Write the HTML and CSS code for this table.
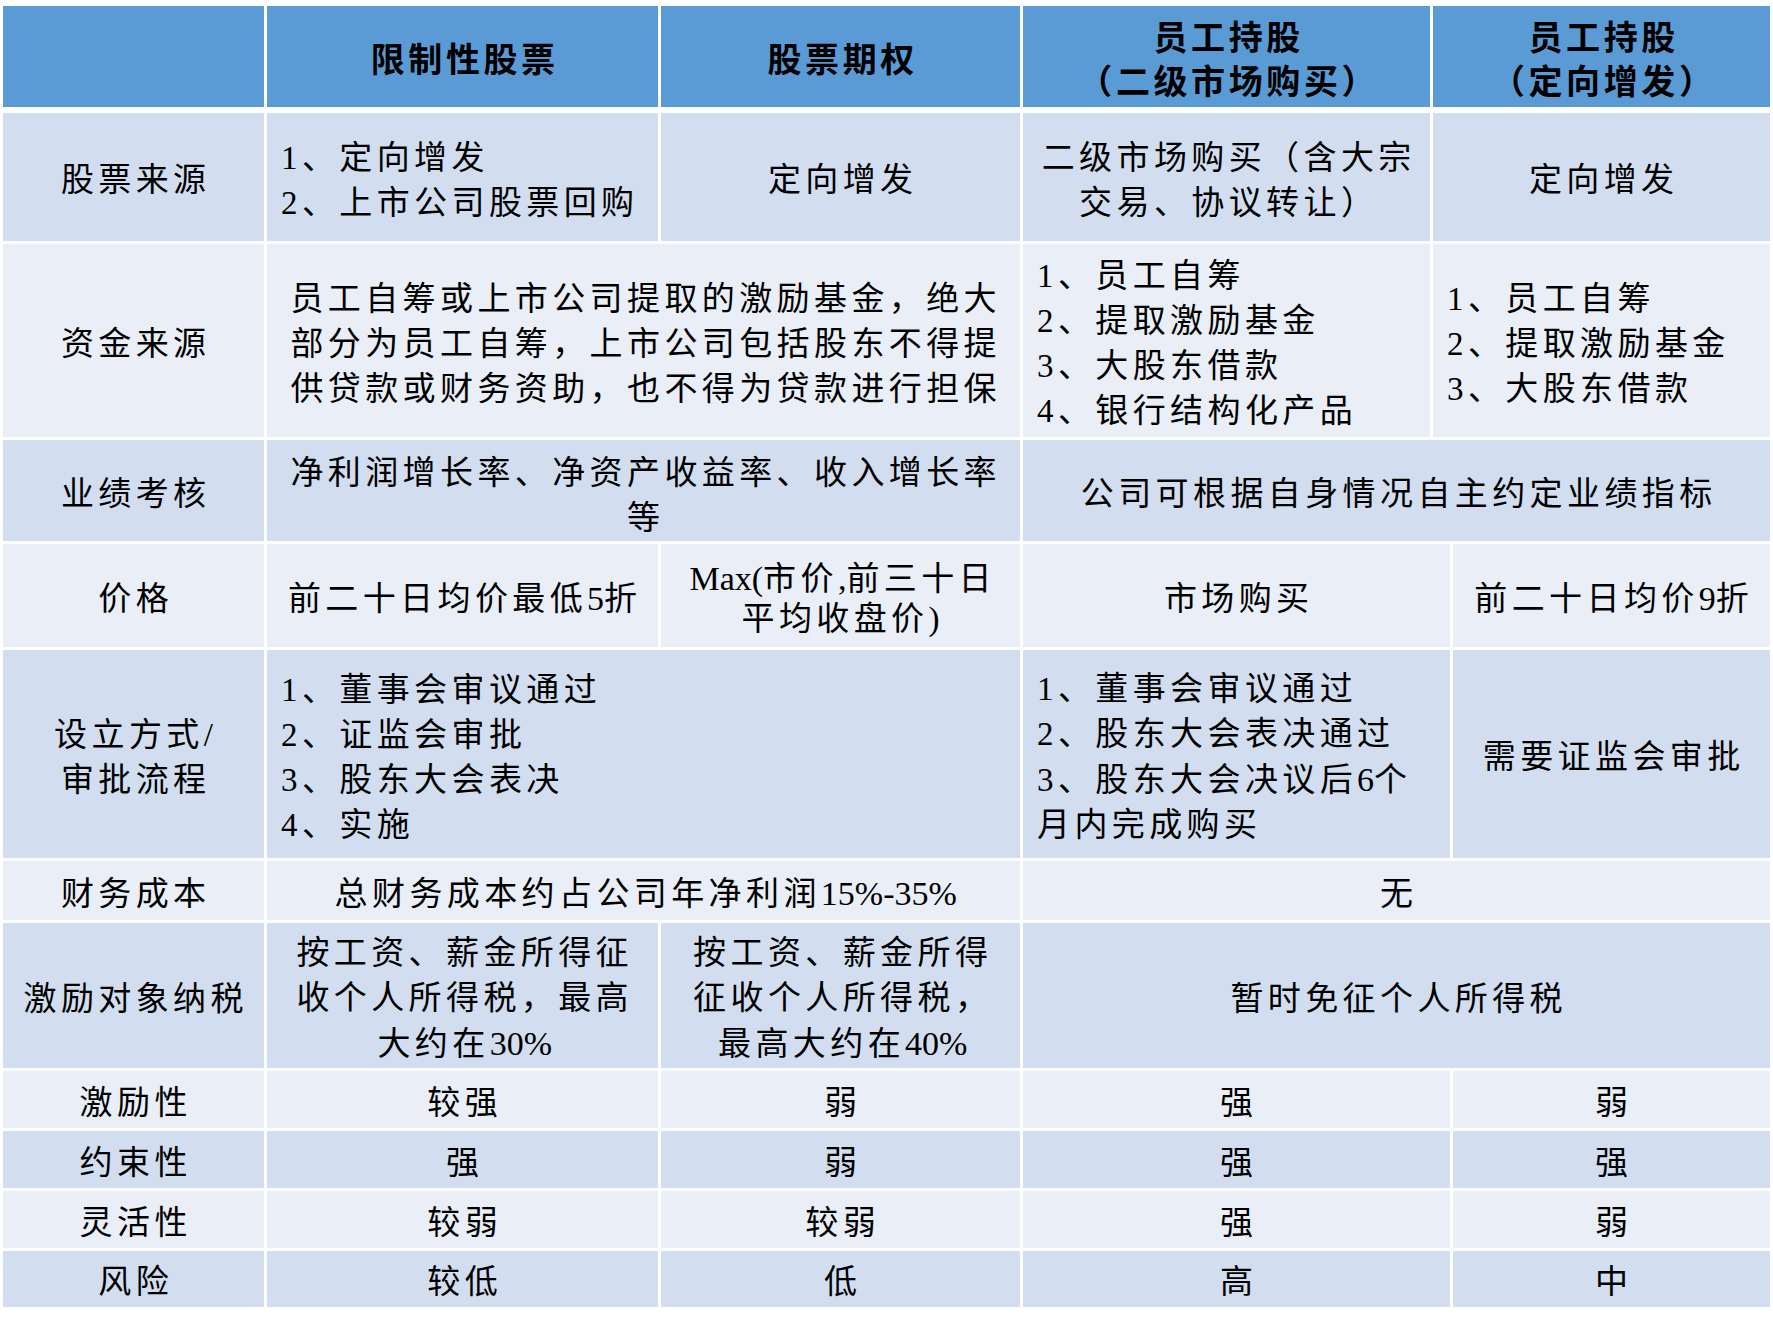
FILE: index.html
```html
<!DOCTYPE html>
<html lang="zh-CN">
<head>
<meta charset="utf-8">
<title>股权激励方式比较</title>
<link rel="stylesheet" href="styles.css">
</head>
<body>
<div class="table">
  <!-- header -->
  <div class="cell hd s1"></div>
  <div class="cell hd s1 c"><div class="t">限制性股票</div></div>
  <div class="cell hd s1 c"><div class="t">股票期权</div></div>
  <div class="cell hd s1 c"><div class="t">员工持股<br>（二级市场购买）</div></div>
  <div class="cell hd s2 c"><div class="t">员工持股<br>（定向增发）</div></div>

  <!-- 股票来源 -->
  <div class="cell dk s1 c"><div class="t">股票来源</div></div>
  <div class="cell dk s1 l"><div class="t">1、定向增发<br>2、上市公司股票回购</div></div>
  <div class="cell dk s1 c"><div class="t">定向增发</div></div>
  <div class="cell dk s1 c"><div class="t">二级市场购买（含大宗<br>交易、协议转让）</div></div>
  <div class="cell dk s2 c"><div class="t">定向增发</div></div>

  <!-- 资金来源 -->
  <div class="cell lt s1 c"><div class="t">资金来源</div></div>
  <div class="cell lt s2 c"><div class="t">员工自筹或上市公司提取的激励基金，绝大<br>部分为员工自筹，上市公司包括股东不得提<br>供贷款或财务资助，也不得为贷款进行担保</div></div>
  <div class="cell lt s1 l"><div class="t">1、员工自筹<br>2、提取激励基金<br>3、大股东借款<br>4、银行结构化产品</div></div>
  <div class="cell lt s2 l"><div class="t">1、员工自筹<br>2、提取激励基金<br>3、大股东借款</div></div>

  <!-- 业绩考核 -->
  <div class="cell dk s1 c"><div class="t">业绩考核</div></div>
  <div class="cell dk s2 c top"><div class="t">净利润增长率、净资产收益率、收入增长率<br>等</div></div>
  <div class="cell dk s3 c"><div class="t">公司可根据自身情况自主约定业绩指标</div></div>

  <!-- 价格 -->
  <div class="cell lt s1 c"><div class="t">价格</div></div>
  <div class="cell lt s1 c"><div class="t">前二十日均价最低<span class="lat">5</span>折</div></div>
  <div class="cell lt s1 c"><div class="t tight"><span class="lat">Max(</span>市价<span class="lat">,</span>前三十日<br>平均收盘价)</div></div>
  <div class="cell lt s2 c"><div class="t">市场购买</div></div>
  <div class="cell lt s1 c"><div class="t">前二十日均价<span class="lat">9</span>折</div></div>

  <!-- 设立方式/审批流程 -->
  <div class="cell dk s1 c"><div class="t">设立方式/<br>审批流程</div></div>
  <div class="cell dk s2 l"><div class="t">1、董事会审议通过<br>2、证监会审批<br>3、股东大会表决<br>4、实施</div></div>
  <div class="cell dk s2 l"><div class="t">1、董事会审议通过<br>2、股东大会表决通过<br>3、股东大会决议后<span class="lat">6</span>个<br>月内完成购买</div></div>
  <div class="cell dk s1 c"><div class="t">需要证监会审批</div></div>

  <!-- 财务成本 -->
  <div class="cell lt s1 c"><div class="t">财务成本</div></div>
  <div class="cell lt s2 c"><div class="t">总财务成本约占公司年净利润<span class="lat">15%-35%</span></div></div>
  <div class="cell lt s3 c"><div class="t">无</div></div>

  <!-- 激励对象纳税 -->
  <div class="cell dk s1 c"><div class="t">激励对象纳税</div></div>
  <div class="cell dk s1 c"><div class="t">按工资、薪金所得征<br>收个人所得税，最高<br>大约在<span class="lat">30%</span></div></div>
  <div class="cell dk s1 c"><div class="t">按工资、薪金所得<br>征收个人所得税，<br>最高大约在<span class="lat">40%</span></div></div>
  <div class="cell dk s3 c"><div class="t">暂时免征个人所得税</div></div>

  <!-- 激励性 -->
  <div class="cell lt s1 c"><div class="t">激励性</div></div>
  <div class="cell lt s1 c"><div class="t">较强</div></div>
  <div class="cell lt s1 c"><div class="t">弱</div></div>
  <div class="cell lt s2 c"><div class="t">强</div></div>
  <div class="cell lt s1 c"><div class="t">弱</div></div>

  <!-- 约束性 -->
  <div class="cell dk s1 c"><div class="t">约束性</div></div>
  <div class="cell dk s1 c"><div class="t">强</div></div>
  <div class="cell dk s1 c"><div class="t">弱</div></div>
  <div class="cell dk s2 c"><div class="t">强</div></div>
  <div class="cell dk s1 c"><div class="t">强</div></div>

  <!-- 灵活性 -->
  <div class="cell lt s1 c"><div class="t">灵活性</div></div>
  <div class="cell lt s1 c"><div class="t">较弱</div></div>
  <div class="cell lt s1 c"><div class="t">较弱</div></div>
  <div class="cell lt s2 c"><div class="t">强</div></div>
  <div class="cell lt s1 c"><div class="t">弱</div></div>

  <!-- 风险 -->
  <div class="cell dk s1 c"><div class="t">风险</div></div>
  <div class="cell dk s1 c"><div class="t">较低</div></div>
  <div class="cell dk s1 c"><div class="t">低</div></div>
  <div class="cell dk s2 c"><div class="t">高</div></div>
  <div class="cell dk s1 c"><div class="t">中</div></div>
</div>
</body>
</html>
```

FILE: styles.css
```css
html, body {
  margin: 0;
  padding: 0;
  background: #ffffff;
}

body {
  width: 1773px;
  height: 1325px;
  overflow: hidden;
  font-family: "Liberation Serif", "Noto Sans CJK SC", serif;
  color: #000000;
}

.table {
  display: grid;
  margin: 6px 0 0 3px;
  width: 1767px;
  grid-template-columns: 261px 391px 359px 407px 17px 317px;
  grid-template-rows: 104px 128px 193px 101px 103px 208px 59px 145px 57px 57px 57px 56px;
  gap: 3px;
}

.cell {
  display: flex;
  align-items: center;
  box-sizing: border-box;
  padding: 0 14px;
  min-width: 0;
}

.s1 { grid-column: span 1; }
.s2 { grid-column: span 2; }
.s3 { grid-column: span 3; }

.c { justify-content: center; }
.c .t { text-align: center; }
.l { justify-content: flex-start; }
.l .t { text-align: left; }

.top { align-items: flex-start; padding-top: 4px; }

.hd {
  background: #5b9bd5;
  margin-bottom: 3px;
}

.dk { background: #d2deef; }
.lt { background: #e9eef7; }

.t {
  font-size: 33px;
  line-height: 45px;
  letter-spacing: 4.4px;
  white-space: nowrap;
  padding-top: 7px;
}

.c .t {
  margin-right: -4.4px;
}

.hd .t {
  font-weight: bold;
  font-size: 34px;
  line-height: 44px;
  letter-spacing: 3.6px;
  padding-top: 8px;
}

.lat {
  letter-spacing: 0;
  font-size: 34px;
}

.tight {
  line-height: 40px;
}
```
